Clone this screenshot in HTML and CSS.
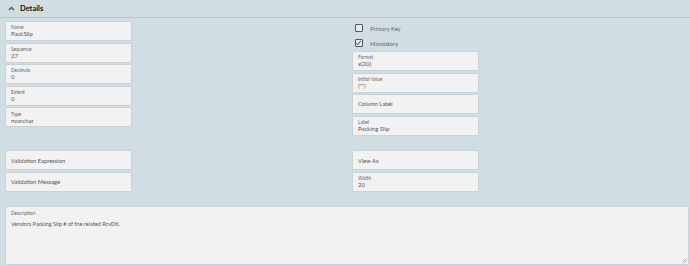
FILE: index.html
```html
<!DOCTYPE html>
<html lang="en">
<head>
	<meta charset="UTF-8">
	<title>Details</title>
	<link rel="stylesheet" href="styles.css">
</head>
<body>
	<div class="panel">
		<div class="panel__header">
			<svg class="panel__chevron" width="7" height="5" viewBox="0 0 7 5"><path d="M1 4 L3.5 1.5 L6 4" fill="none" stroke="#1f5f9a" stroke-width="1.3"/></svg>
			<span class="panel__title">Details</span>
		</div>
		<div class="panel__body">
			<div class="columns">
				<div class="column">
					<div class="field"><div class="field__label">Name</div><div class="field__value">PackSlip</div></div>
					<div class="field"><div class="field__label">Sequence</div><div class="field__value">27</div></div>
					<div class="field"><div class="field__label">Decimals</div><div class="field__value">0</div></div>
					<div class="field"><div class="field__label">Extent</div><div class="field__value">0</div></div>
					<div class="field"><div class="field__label">Type</div><div class="field__value">nvarchar</div></div>
				</div>
				<div class="column">
					<div class="check"><span class="check__box"></span>Primary Key</div>
					<div class="check"><span class="check__box"><svg width="8" height="8" viewBox="0 0 8 8"><path d="M1.5 4.2 L3.3 6 L6.6 1.6" fill="none" stroke="#333" stroke-width="1"/></svg></span>Mandatory</div>
					<div class="field"><div class="field__label">Format</div><div class="field__value">x(20)</div></div>
					<div class="field"><div class="field__label">Initial Value</div><div class="field__value">("")</div></div>
					<div class="field field--empty"><div class="field__value">Column Label</div></div>
					<div class="field"><div class="field__label">Label</div><div class="field__value">Packing Slip</div></div>
				</div>
			</div>
			<div class="columns columns--lower">
				<div class="column">
					<div class="field field--empty"><div class="field__value">Validation Expression</div></div>
					<div class="field field--empty"><div class="field__value">Validation Message</div></div>
				</div>
				<div class="column">
					<div class="field field--empty"><div class="field__value">View As</div></div>
					<div class="field"><div class="field__label">Width</div><div class="field__value">20</div></div>
				</div>
			</div>
			<div class="description">
				<div class="field__label">Description</div>
				<div class="description__text">Vendors Packing Slip # of the related RcvDtl.</div>
				<svg class="description__grip" width="5" height="5" viewBox="0 0 5 5"><path d="M4.5 0.5 L0.5 4.5 M4.5 2.5 L2.5 4.5" stroke="#888" stroke-width="0.7"/></svg>
			</div>
		</div>
	</div>
</body>
</html>
```

FILE: styles.css
```css
*{
	margin: 0;
	padding: 0;
	box-sizing: border-box;
}
body{
	height: 266px;
	overflow: hidden;
	background-color: #d0dde2;
	font-family: Lato, "Liberation Sans", sans-serif;
	color: #555;
}

.panel__header{
	display: flex;
	align-items: center;
	height: 18px;
	padding-left: 8px;
	border-bottom: 1px solid #a9c6d1;
}
.panel__chevron{
	margin-right: 5px;
	margin-top: -1px;
}
.panel__title{
	font-size: 7.5px;
	font-weight: bold;
	color: #111;
}

.panel__body{
	padding: 4px 2px 0 6px;
}

.columns{
	display: flex;
}
.columns--lower{
	margin-top: 16.5px;
}
.column{
	display: flex;
	flex-direction: column;
	flex-shrink: 0;
	gap: 3.6px;
	width: 347px;
}

.field{
	display: flex;
	flex-direction: column;
	justify-content: center;
	width: 125px;
	height: 18px;
	padding-left: 5px;
	background-color: #f2f2f2;
	box-shadow: 0 0 1px rgba(0,0,0,0.25);
}
.field__label{
	font-size: 4.8px;
	line-height: 6px;
	color: #666;
}
.field__value{
	font-size: 6px;
	line-height: 7.5px;
	color: #555;
}
.field--empty .field__value{
	font-size: 5.8px;
}

.check{
	display: flex;
	align-items: center;
	height: 10.4px;
	margin-top: 1px;
	font-size: 5.8px;
	color: #666;
}
.check__box{
	display: flex;
	width: 8px;
	height: 8px;
	margin: 0 7px 0 2px;
	border: 1px solid #555;
	border-radius: 1px;
	background-color: #e6ecee;
}
.check__box svg{
	margin: -1px 0 0 -1px;
}

.description{
	position: relative;
	height: 57px;
	margin-top: 16.5px;
	padding: 3px 5px;
	background-color: #f2f2f2;
	box-shadow: 0 0 1px rgba(0,0,0,0.25);
}
.description__text{
	margin-top: 4px;
	font-size: 5.6px;
	color: #555;
}
.description__grip{
	position: absolute;
	right: 1px;
	bottom: 1px;
}
```
